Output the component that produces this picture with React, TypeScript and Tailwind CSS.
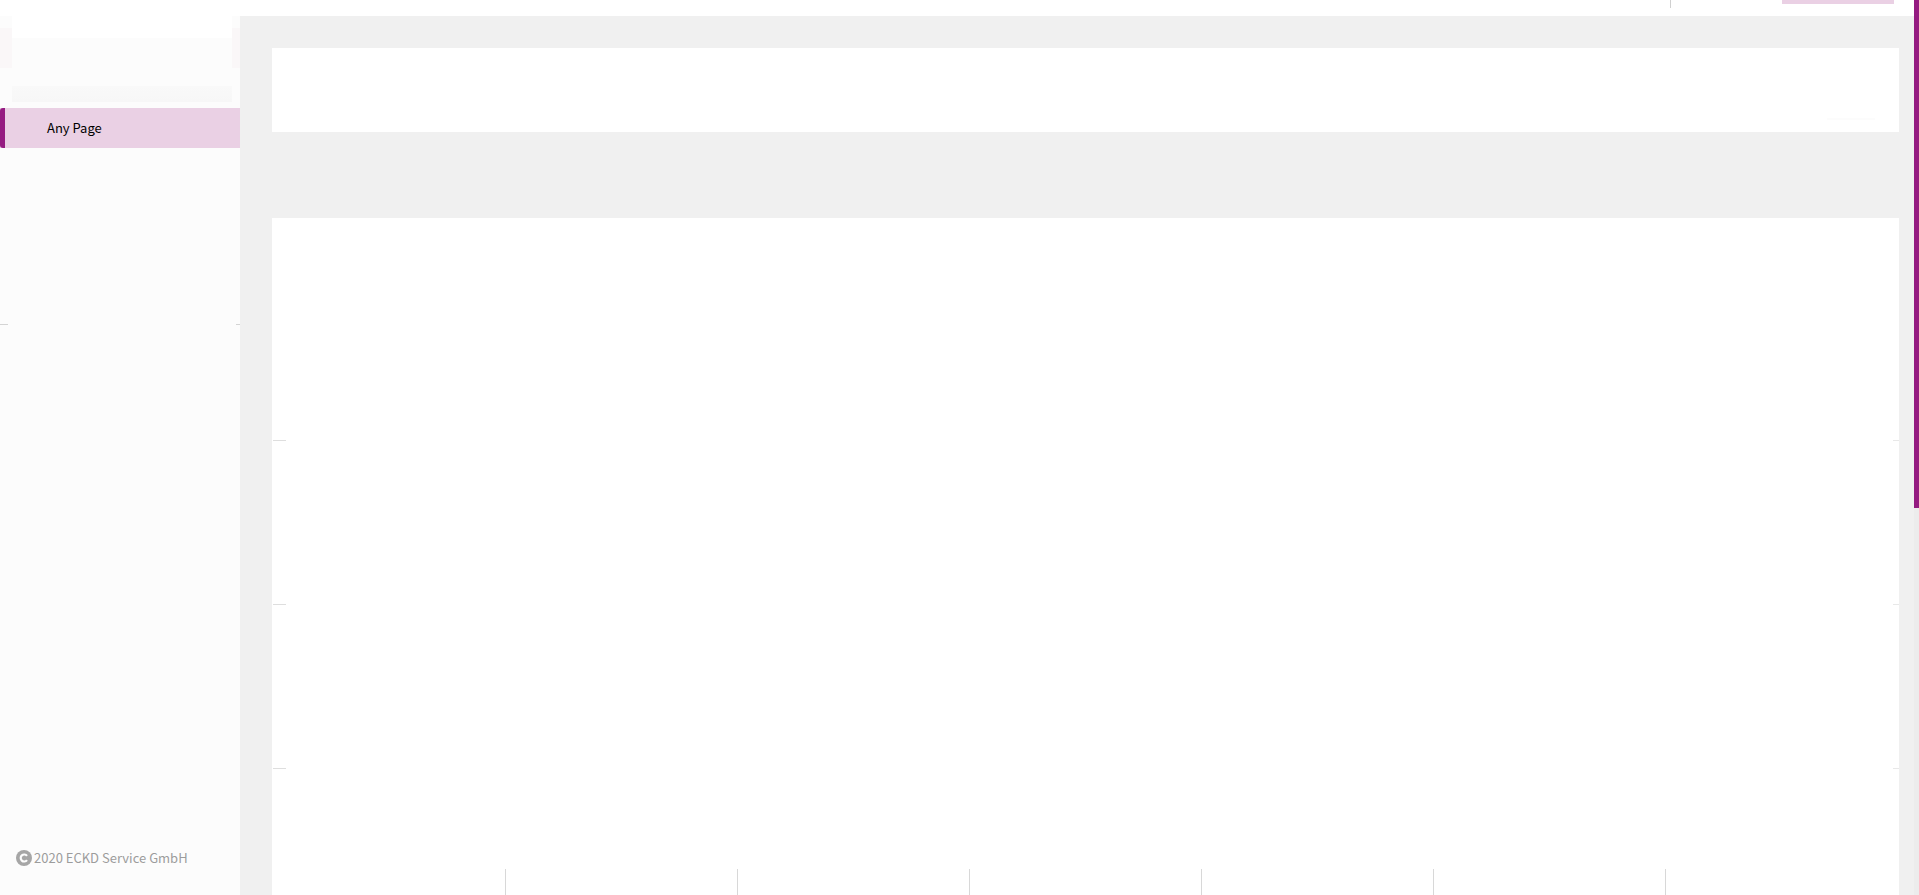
const columns = [0, 1, 2, 3, 4, 5];

function Header() {
  return (
    <header className="flex h-4 shrink-0 items-start justify-end bg-white pr-5">
      <div className="mr-[111px] h-2 w-px bg-[#d0d0d0]" />
      <div className="h-1 w-28 bg-[#ead0e4]" />
    </header>
  );
}

function CopyrightIcon() {
  return (
    <svg viewBox="0 0 16 16" className="size-4 shrink-0" aria-hidden="true">
      <circle cx="8" cy="8" r="8" fill="#a6a6a6" />
      <path
        d="M11 5.9A3.5 3.5 0 1 0 11 10.1"
        fill="none"
        stroke="#fcfcfc"
        strokeWidth="2.2"
      />
    </svg>
  );
}

function Sidebar() {
  return (
    <aside className="flex w-60 shrink-0 flex-col bg-[#fcfcfc]">
      <div className="flex h-[52px] justify-between">
        <div className="mt-3 w-3 bg-[#faf7f8]" />
        <div className="h-[22px] flex-1 bg-white" />
        <div className="mt-3 w-2 bg-[#faf7f8]" />
      </div>
      <div className="mt-[18px] mr-2 ml-3 h-4 bg-gradient-to-b from-[#f9f9f9] to-[#f7f7f7]" />
      <nav className="mt-[6px] flex bg-[#ead0e4]">
        <a
          href="#any-page"
          className="flex h-10 flex-1 items-center rounded-l-[3px] border-l-[5px] border-[#951b81] pl-[42px] font-['Noto_Sans_CJK_SC',sans-serif] text-[13px] leading-5 text-black"
        >
          Any Page
        </a>
      </nav>
      <div className="mt-44 flex justify-between">
        <div className="h-px w-2 bg-[#d4d4d4]" />
        <div className="h-px w-1 bg-[#d4d4d4]" />
      </div>
      <footer className="mt-auto flex items-center gap-[2px] pb-[27px] pl-4 font-['Noto_Sans_CJK_SC',sans-serif] text-[13px] leading-5 text-[#9c9c9c]">
        <CopyrightIcon />
        <span>2020 ECKD Service GmbH</span>
      </footer>
    </aside>
  );
}

function RowDivider() {
  return (
    <div className="flex justify-between pl-px">
      <div className="h-px w-[13px] bg-[#dedede]" />
      <div className="h-px w-[6px] bg-[#e8e8e8]" />
    </div>
  );
}

export default function App() {
  return (
    <div className="flex h-screen overflow-hidden bg-[#f0f0f0]">
      <div className="flex min-w-0 flex-1 flex-col">
        <Header />
        <div className="flex min-h-0 flex-1">
          <Sidebar />
          <main className="flex min-w-0 flex-1 flex-col pt-8 pr-[15px] pl-8">
            <section className="flex h-21 shrink-0 flex-col justify-end bg-white">
              <div className="mr-6 mb-3 h-[2px] w-12 self-end bg-[#fcfcfc]" />
            </section>
            <section className="mt-[86px] flex min-h-0 flex-1 flex-col bg-white">
              <div className="flex flex-col gap-[163px] pt-[222px]">
                <RowDivider />
                <RowDivider />
                <RowDivider />
              </div>
              <div className="mt-auto grid h-[26px] grid-cols-7 pr-px pl-[2px]">
                {columns.map((column) => (
                  <div key={column} className="border-r border-[#d8d8d8]" />
                ))}
              </div>
            </section>
          </main>
        </div>
      </div>
      <div className="w-[5px] shrink-0 bg-[#ececec]">
        <div className="h-[508px] bg-[#951b81]" />
      </div>
    </div>
  );
}
